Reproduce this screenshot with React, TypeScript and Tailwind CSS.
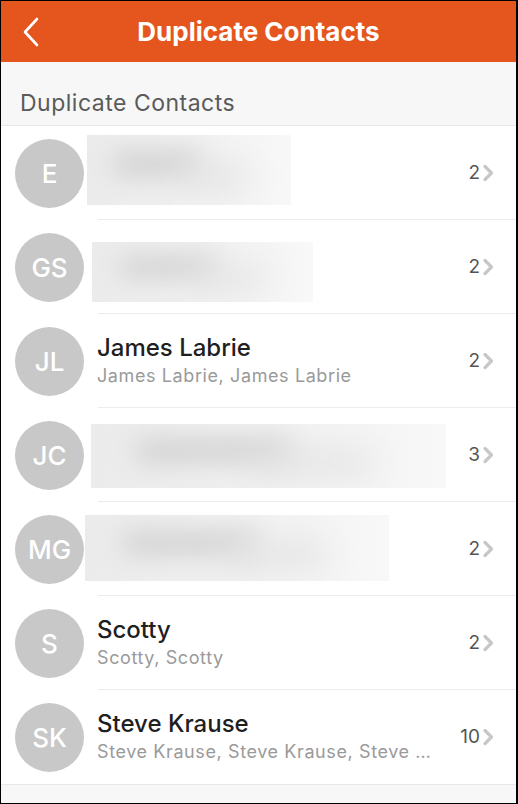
type Contact = {
  initials: string;
  name?: string;
  dupes?: string;
  count: number;
  // blurred placeholder box for redacted names
  blur?: { left: number; width: number; top: number; height: number };
};

const contacts: Contact[] = [
  { initials: 'E', count: 2, blur: { left: 86, width: 204, top: 9, height: 70 } },
  { initials: 'GS', count: 2, blur: { left: 91, width: 221, top: 22, height: 60 } },
  { initials: 'JL', name: 'James Labrie', dupes: 'James Labrie, James Labrie', count: 2 },
  { initials: 'JC', count: 3, blur: { left: 90, width: 355, top: 16, height: 64 } },
  { initials: 'MG', count: 2, blur: { left: 84, width: 304, top: 13, height: 66 } },
  { initials: 'S', name: 'Scotty', dupes: 'Scotty, Scotty', count: 2 },
  { initials: 'SK', name: 'Steve Krause', dupes: 'Steve Krause, Steve Krause, Steve Krause', count: 10 },
];

function Redacted({ box }: { box: NonNullable<Contact['blur']> }) {
  return (
    <div
      className="absolute overflow-hidden bg-gradient-to-r from-[#ebebeb] via-[#f1f1f1] to-[#f8f8f8]"
      style={{ left: box.left, width: box.width, top: box.top, height: box.height }}
    >
      <div className="absolute left-[12%] top-[22%] h-[40%] w-[45%] rounded-full bg-[#d4d4d4] blur-md" />
      <div className="absolute left-[45%] top-[40%] h-[40%] w-[35%] rounded-full bg-[#e4e4e4] blur-lg" />
    </div>
  );
}

function Chevron() {
  return (
    <svg width="13" height="18" viewBox="0 0 13 18" className="ml-[2px]">
      <path d="M3 2.5 L9.5 9 L3 15.5" fill="none" stroke="#c7c7c7" strokeWidth="3.2" strokeLinecap="round" strokeLinejoin="round" />
    </svg>
  );
}

function ContactRow({ c, last }: { c: Contact; last: boolean }) {
  return (
    <div className="relative flex h-[94px] items-center bg-white">
      <div className="ml-[14px] flex h-[69px] w-[69px] shrink-0 items-center justify-center rounded-full bg-[#c8c8c8] text-[26px] font-medium text-white">
        {c.initials}
      </div>
      <div className="ml-[13px] flex min-w-0 flex-1 flex-col">
        {c.name && (
          <>
            <div className="truncate text-[24px] font-medium leading-[28px] text-[#1f1f1f]">{c.name}</div>
            <div className="mt-[2px] truncate text-[18px] leading-[24px] tracking-[0.6px] text-[#9a9a9a]">{c.dupes}</div>
          </>
        )}
      </div>
      {c.blur && <Redacted box={c.blur} />}
      <div className="ml-[18px] mr-[21px] flex shrink-0 items-center text-[19px] text-[#555]">
        <span>{c.count}</span>
        <Chevron />
      </div>
      {!last && <div className="absolute bottom-0 left-[97px] right-0 h-px bg-[#ececec]" />}
    </div>
  );
}

export default function App() {
  return (
    <div
      className="flex h-[804px] w-[518px] flex-col overflow-hidden border-t border-b border-l border-r-2 border-black bg-[#f7f7f7]"
      style={{ fontFamily: 'Inter, "Liberation Sans", Arial, sans-serif' }}
    >
      {/* Nav bar */}
      <div className="relative flex h-[61px] shrink-0 items-center justify-center bg-[#e5561f]">
        <svg width="20" height="30" viewBox="0 0 20 30" className="absolute left-[20px] top-[16px]">
          <path d="M16 2 L4 15 L16 28" fill="none" stroke="#fff" strokeWidth="2.6" strokeLinecap="round" strokeLinejoin="round" />
        </svg>
        <h1 className="text-[26px] font-bold text-white">Duplicate Contacts</h1>
      </div>

      {/* Section header */}
      <div className="flex h-[64px] shrink-0 items-end border-b border-[#e8e8e8] pb-[5px] pl-[19px] text-[23px] tracking-[0.5px] text-[#5a5a5a]">
        Duplicate Contacts
      </div>

      <div className="flex flex-col border-b border-[#e8e8e8]">
        {contacts.map((c, i) => (
          <ContactRow key={c.initials} c={c} last={i === contacts.length - 1} />
        ))}
      </div>
    </div>
  );
}
